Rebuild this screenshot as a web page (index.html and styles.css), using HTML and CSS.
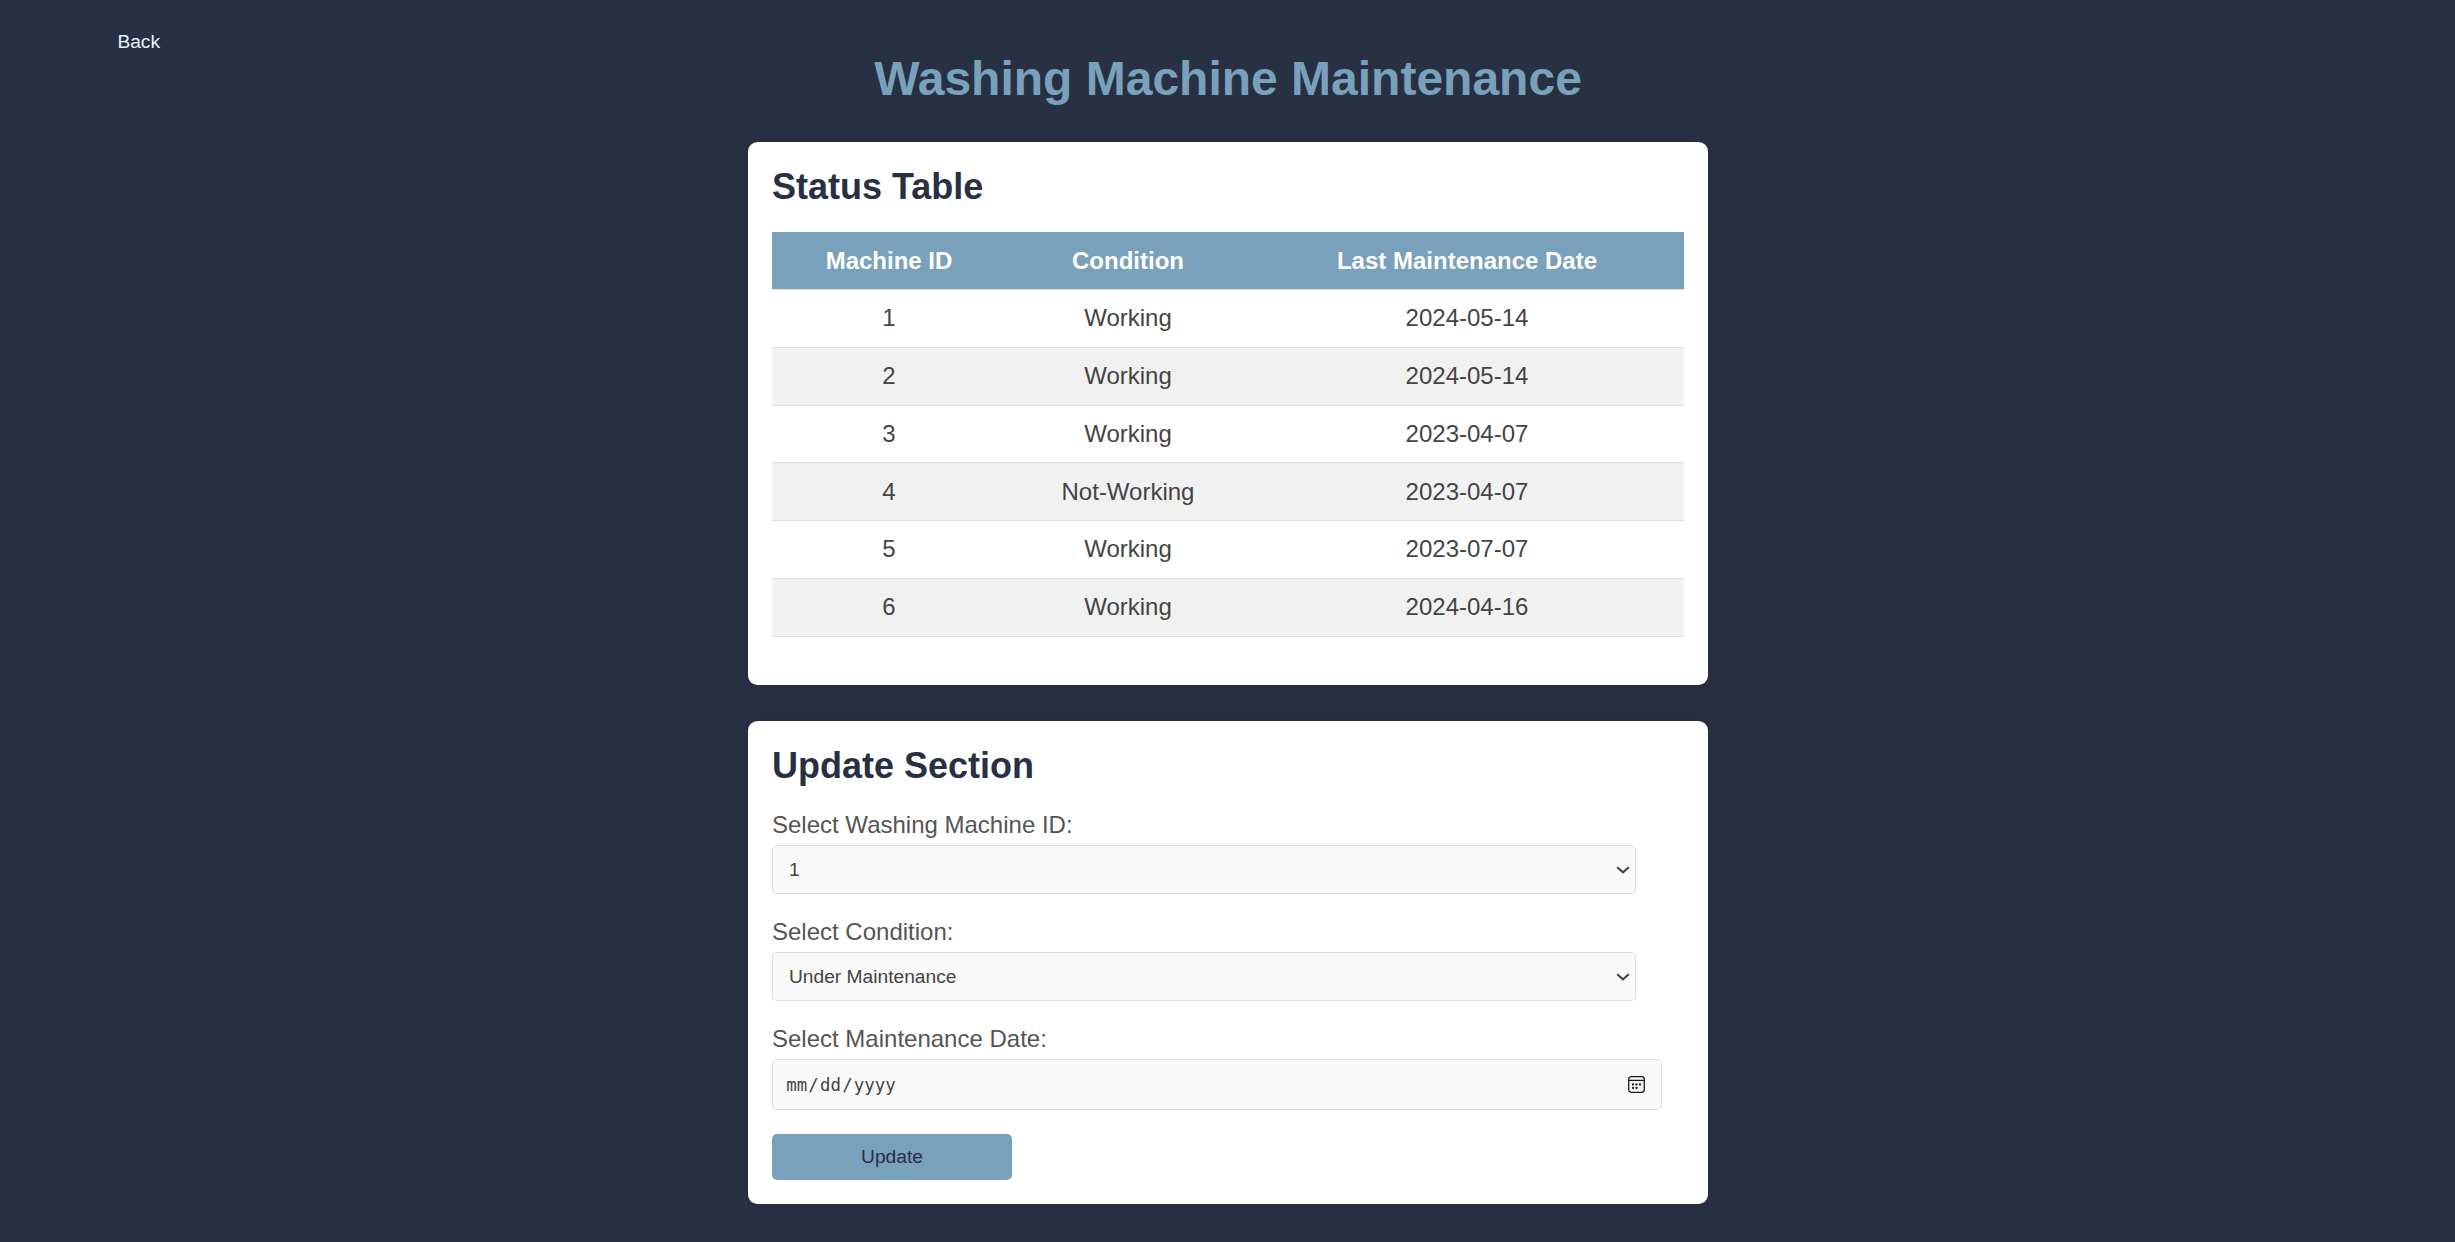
FILE: index.html
```html
<!DOCTYPE html>
<html lang="en">
<head>
<meta charset="utf-8">
<title>Washing Machine Maintenance</title>
<link rel="stylesheet" href="styles.css">
</head>
<body>
<a class="back" href="#">Back</a>
<main class="page">
  <h1 class="title">Washing Machine Maintenance</h1>
  <section class="card card-status">
    <h2 class="heading">Status Table</h2>
    <table class="status">
      <colgroup><col class="col-id"><col class="col-condition"><col class="col-date"></colgroup>
      <thead><tr><th>Machine ID</th><th>Condition</th><th>Last Maintenance Date</th></tr></thead>
      <tbody>
        <tr><td>1</td><td>Working</td><td>2024-05-14</td></tr>
        <tr><td>2</td><td>Working</td><td>2024-05-14</td></tr>
        <tr><td>3</td><td>Working</td><td>2023-04-07</td></tr>
        <tr><td>4</td><td>Not-Working</td><td>2023-04-07</td></tr>
        <tr><td>5</td><td>Working</td><td>2023-07-07</td></tr>
        <tr><td>6</td><td>Working</td><td>2024-04-16</td></tr>
      </tbody>
    </table>
  </section>
  <section class="card card-update">
    <h2 class="heading">Update Section</h2>
    <form class="form">
      <div class="field">
        <label class="label" for="machine">Select Washing Machine ID:</label>
        <div class="select">
          <select class="control" id="machine"><option>1</option></select>
          <svg class="chevron" viewBox="0 0 14 8"><path d="M1.2 1.2 7 6.3l5.8-5.1"/></svg>
        </div>
      </div>
      <div class="field">
        <label class="label" for="condition">Select Condition:</label>
        <div class="select">
          <select class="control" id="condition"><option>Under Maintenance</option></select>
          <svg class="chevron" viewBox="0 0 14 8"><path d="M1.2 1.2 7 6.3l5.8-5.1"/></svg>
        </div>
      </div>
      <div class="field">
        <span class="label">Select Maintenance Date:</span>
        <div class="control date">
          <div class="date-text"><span>mm</span>/<span>dd</span>/<span>yyyy</span></div>
          <svg class="calendar" viewBox="0 0 17 17">
            <rect x=".7" y=".7" width="15.6" height="15.6" rx="2.7"/>
            <path d="M.7 4.4h15.6"/>
            <g class="dots"><circle cx="5" cy="8.5" r="1.15"/><circle cx="8.5" cy="8.5" r="1.15"/><circle cx="12" cy="8.5" r="1.15"/><circle cx="5" cy="12" r="1.15"/><circle cx="8.5" cy="12" r="1.15"/></g>
          </svg>
        </div>
      </div>
      <button class="submit" type="button">Update</button>
    </form>
  </section>
</main>
</body>
</html>
```

FILE: styles.css
```css
* { box-sizing: border-box; }

body {
  margin: 0;
  height: 1242px;
  overflow: hidden;
  background: #283043;
  font-family: "Liberation Sans", Arial, sans-serif;
  color: #444;
}

.back {
  display: block;
  width: 60px;
  height: 22px;
  margin: 31px 0 0 117.4px;
  font-size: 19.2px;
  line-height: 22px;
  color: #e8f1f9;
  text-decoration: none;
}

.page {
  width: 960px;
  margin-left: 748px;
}

.title {
  margin: -1px 0 0;
  height: 90px;
  font-size: 48px;
  line-height: 54px;
  text-align: center;
  color: #79a1bb;
}

.card {
  padding: 24px;
  border-radius: 9.6px;
  background: #fff;
  box-shadow: 0 0 12px rgba(0, 0, 0, .1);
}

.card-status { height: 543px; }
.card-update { height: 483px; margin-top: 36px; }

.heading {
  margin: 0;
  height: 66px;
  font-size: 36px;
  line-height: 42px;
  color: #283043;
}

.status {
  width: 912px;
  table-layout: fixed;
  border-spacing: 0;
  font-size: 24px;
  line-height: 28px;
  text-align: center;
}

.col-id { width: 234px; }
.col-condition { width: 244px; }
.col-date { width: 434px; }

.status th,
.status td {
  height: 58px;
  padding: 0;
  border-bottom: 1px solid #ddd;
}

.status th { background: #79a1bb; background-clip: padding-box; color: #fff; }
.status td { padding-bottom: 2px; }
.status tbody tr:nth-child(even) { background: #f1f1f1; }
.status tbody tr:nth-child(3) td { height: 57px; padding-bottom: 0; }
.status tbody tr:nth-child(4) td { padding-bottom: 0; }

.form { display: flex; flex-direction: column; }

.field { margin-bottom: 24px; }

.label {
  display: block;
  height: 34px;
  font-size: 24px;
  line-height: 28px;
  color: #555;
}

.select {
  position: relative;
  width: 864px;
  height: 49px;
}

.control {
  display: block;
  width: 100%;
  height: 49px;
  padding: 0 16px;
  border: 1px solid #ddd;
  border-radius: 5px;
  background: #f9f9f9;
  color: #444;
  font: 19.2px "Liberation Sans", Arial, sans-serif;
  appearance: none;
}

.chevron {
  position: absolute;
  right: 6px;
  top: 21px;
  width: 14px;
  height: 8px;
  fill: none;
  stroke: #444;
  stroke-width: 2.1;
}

.date {
  display: flex;
  align-items: center;
  justify-content: space-between;
  width: 890px;
  height: 51px;
  padding: 0 16px 0 12px;
}

.date-text { padding-top: 1px; font: 17.4px "DejaVu Sans Mono", monospace; }
.date-text span { padding: 0 1.2px; }

.calendar {
  width: 17px;
  height: 17px;
  fill: none;
  stroke: #1b1b1b;
  stroke-width: 1.3;
}

.dots { fill: #1b1b1b; stroke: none; }

.submit {
  width: 240px;
  height: 46px;
  padding: 0;
  border: 0;
  border-radius: 5px;
  background: #79a1bb;
  color: #283043;
  font: 19.2px "Liberation Sans", Arial, sans-serif;
}
```
